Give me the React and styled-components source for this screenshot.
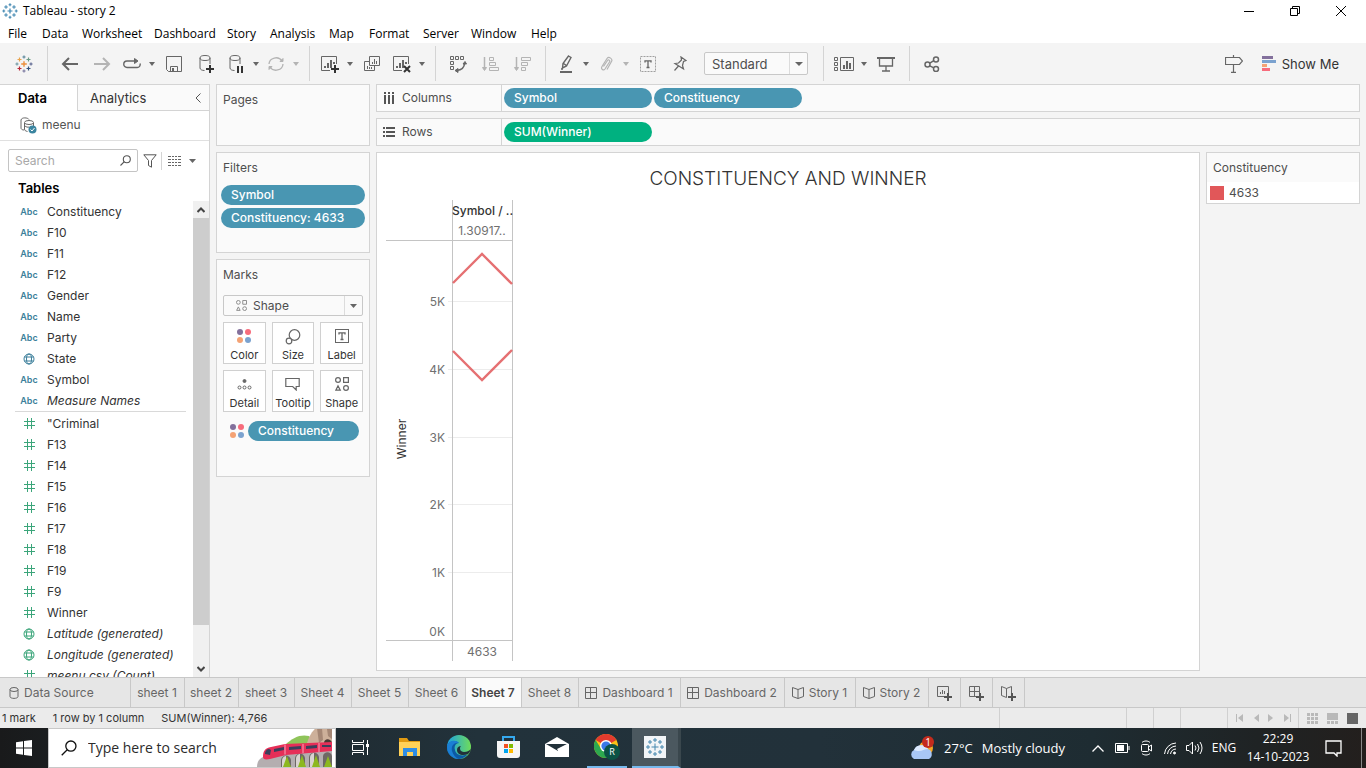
import React from "react";
import styled, { createGlobalStyle, css } from "styled-components";

const ui = `Inter, "Open Sans", sans-serif`;
const win = `"Open Sans", "Noto Sans", sans-serif`;

const Global = createGlobalStyle`
  *, *::before, *::after { box-sizing: border-box; }
  body { margin: 0; background: #f4f4f4; color: #333; font: 12px/16px ${ui}; }
  button, input, select { font: inherit; color: inherit; margin: 0; }
  button { background: none; border: 0; padding: 0; cursor: pointer; }
  svg { display: block; flex: none; }
`;

const Window = styled.div`
  display: flex;
  flex-direction: column;
  height: 100vh;
  overflow: hidden;
`;

/* ---------- title bar and menu ---------- */
const TitleBar = styled.header`
  display: flex;
  align-items: center;
  height: 24px;
  background: #fff;
  color: #000;
  font: 12px/16px ${win};
  padding: 0 2px 2px;
`;
const AppTitle = styled.h1`
  flex: 1;
  margin: 0 0 0 5px;
  font: inherit;
`;
const WindowButton = styled.button`
  display: grid;
  place-items: center;
  width: 46px;
  height: 22px;
`;
const MenuBar = styled.nav`
  display: flex;
  height: 19px;
  background: #fff;
  padding-left: 8px;
`;
const MenuItem = styled.button`
  font: 12px/18px ${win};
  color: #000;
  width: ${(p) => p.$w}px;
  text-align: left;
  white-space: nowrap;
`;

/* ---------- toolbar ---------- */
const Toolbar = styled.div`
  display: flex;
  align-items: center;
  height: 41px;
  padding-right: 27px;
  color: #555;
`;
const ToolButton = styled.button`
  display: grid;
  place-items: center;
  width: ${(p) => (p.$menu ? 28 : 32)}px;
  height: 32px;
  color: ${(p) => (p.$off ? "#b4b4b4" : "#666")};
`;
const CaretButton = styled.button`
  display: grid;
  place-items: center;
  width: 12px;
  height: 32px;
  color: ${(p) => (p.$off ? "#b4b4b4" : "#666")};
`;
const LogoButton = styled(ToolButton)`
  width: 47px;
`;
const Divider = styled.span`
  width: 1px;
  height: 35px;
  background: #d4d4d4;
  margin-right: 6px;
  margin-left: ${(p) => p.$left || 0}px;
`;
const SelectBox = styled.div`
  position: relative;
  display: flex;
  align-items: center;
  height: ${(p) => p.$h}px;
  width: ${(p) => p.$w}px;
  background: #fafafa;
  border: 1px solid #c8c8c8;
  border-radius: 2px;
  margin-left: ${(p) => p.$left || 0}px;

  select {
    appearance: none;
    flex: 1;
    height: 100%;
    border: 0;
    outline: 0;
    background: none;
    padding: 0 0 0 ${(p) => p.$pad}px;
    color: #4e4e4e;
    font-size: ${(p) => p.$font}px;
  }
`;
const SelectArrow = styled.span`
  position: absolute;
  right: 0;
  top: 0;
  bottom: 0;
  width: 18px;
  display: grid;
  place-items: center;
  border-left: 1px solid #dcdcdc;
  color: #666;
  pointer-events: none;
`;
const SelectIcon = styled.span`
  position: absolute;
  left: 12px;
  color: #888;
`;
const Spacer = styled.span`
  flex: 1;
`;
const ShowMe = styled.button`
  display: flex;
  align-items: center;
  gap: 6px;
  margin-left: 12px;
  font-size: 13px;
  line-height: 16px;
  color: #333;
`;

/* ---------- body ---------- */
const Body = styled.div`
  display: flex;
  flex: 1;
  min-height: 0;
`;
const DataPane = styled.aside`
  display: flex;
  flex-direction: column;
  width: 210px;
  background: #fff;
  border: solid #d4d4d4;
  border-width: 1px 1px 0 0;
`;
const PaneTabs = styled.div`
  display: flex;
  height: 26px;
`;
const PaneTab = styled.button`
  font-size: 13px;
  line-height: 24px;
  text-align: left;
  ${(p) =>
    p.$active
      ? css`
          width: 77px;
          padding-left: 18px;
          font-weight: 600;
          color: #000;
        `
      : css`
          flex: 1;
          padding-left: 12px;
          background: #fafafa;
          border: solid #d4d4d4;
          border-width: 0 0 1px 1px;
          color: #333;
        `}
`;
const CollapseButton = styled.button`
  display: grid;
  place-items: center;
  width: 22px;
  background: #fafafa;
  border-bottom: 1px solid #d4d4d4;
`;
const Source = styled.button`
  display: flex;
  align-items: center;
  gap: 5px;
  height: 30px;
  padding: 0 0 1px 20px;
  border-bottom: 1px solid #e0e0e0;
  color: #555;
`;
const SearchRow = styled.div`
  display: flex;
  align-items: center;
  padding: 8px 8px 0;
`;
const SearchField = styled.label`
  display: flex;
  align-items: center;
  width: 130px;
  height: 23px;
  border: 1px solid #c4c4c4;
  border-radius: 2px;
  padding-right: 6px;

  input {
    flex: 1;
    min-width: 0;
    border: 0;
    outline: 0;
    background: none;
    padding: 0 6px;
  }
  input::placeholder { color: #a8a8a8; opacity: 1; }
`;
const SmallButton = styled.button`
  display: grid;
  place-items: center;
  width: ${(p) => p.$w}px;
  height: 18px;
  color: #666;
  ${(p) => p.$line && "border-left: 1px solid #d4d4d4;"}
`;
const TablesHeading = styled.h2`
  margin: 0;
  padding: 7px 0 4px 18px;
  font-size: 13px;
  font-weight: 600;
  line-height: 18px;
  color: #000;
`;
const FieldArea = styled.div`
  display: flex;
  flex: 1;
  min-height: 0;
`;
const FieldList = styled.ul`
  flex: 1;
  margin: 0;
  padding: 0 7px 0 15px;
  list-style: none;
  overflow: hidden;
`;
const Field = styled.li`
  display: flex;
  align-items: center;
  height: 21px;
  color: #333;
  white-space: nowrap;
  font-style: ${(p) => (p.$gen ? "italic" : "normal")};
  ${(p) =>
    p.$first &&
    css`
      height: 23px;
      padding-top: 1px;
      border-top: 1px solid #d9d9d9;
    `}
`;
const FieldType = styled.span`
  display: grid;
  place-items: center;
  width: 28px;
  margin-right: 4px;
  font: 600 9px/12px ${ui};
  color: ${(p) => (p.$green ? "#3ba57a" : "#3c7f9b")};
`;
const Scrollbar = styled.div`
  display: flex;
  flex-direction: column;
  width: 16px;
  background: #f0f0f0;
`;
const ScrollButton = styled.button`
  display: grid;
  place-items: center;
  height: 17px;
  flex: none;
`;
const ScrollThumb = styled.div`
  flex: 406;
  background: #cdcdcd;
`;
const ScrollRest = styled.div`
  flex: 35;
`;

const Cards = styled.div`
  display: flex;
  flex-direction: column;
  gap: 6px;
  width: 154px;
  margin-left: 6px;
`;
const Card = styled.section`
  flex: none;
  min-height: ${(p) => p.$h}px;
  padding: 0 4px;
  background: #fafafa;
  border: 1px solid #d4d4d4;
`;
const CardTitle = styled.h3`
  margin: 0;
  padding: 7px 2px 8px;
  font-size: 12px;
  font-weight: 400;
  line-height: 16px;
  color: #4e4e4e;
`;
const Pill = styled.button`
  display: block;
  height: 20px;
  width: ${(p) => (p.$w ? `${p.$w}px` : "100%")};
  padding-left: 10px;
  border-radius: 10px;
  background: ${(p) => (p.$green ? "#00b180" : "#4996b2")};
  color: #fff;
  font-weight: 500;
  text-align: left;
  white-space: nowrap;
`;
const Stack = styled.div`
  display: grid;
  gap: 3px;
  padding-top: 1px;
`;
const MarksBody = styled.div`
  padding: 4px 2px 0;
`;
const MarkGrid = styled.div`
  display: grid;
  grid-template-columns: repeat(3, 1fr);
  gap: 6px;
  padding-top: 6px;
`;
const MarkButton = styled.button`
  display: flex;
  flex-direction: column;
  align-items: center;
  justify-content: space-between;
  height: 42px;
  padding: 6px 0 1px;
  background: #fff;
  border: 1px solid #d0d0d0;
  font-size: 11px;
  line-height: 14px;
  color: #333;

  svg { color: #666; }
`;
const Encoding = styled.div`
  display: flex;
  align-items: center;
  gap: 4px;
  padding: 9px 0 0 7px;
`;

const Workspace = styled.main`
  flex: 1;
  min-width: 0;
  display: flex;
  flex-direction: column;
  gap: 6px;
  padding: 0 6px 6px;
`;
const Shelf = styled.section`
  display: flex;
  height: 28px;
  flex: none;
  background: #fafafa;
  border: 1px solid #d4d4d4;
`;
const ShelfLabel = styled.div`
  display: flex;
  align-items: center;
  gap: 7px;
  width: 125px;
  padding-left: 6px;
  border-right: 1px solid #d4d4d4;
  color: #4e4e4e;
`;
const ShelfPills = styled.div`
  display: flex;
  align-items: center;
  gap: 2px;
  padding-left: 2px;
`;
const ViewRow = styled.div`
  display: flex;
  flex: 1;
  min-height: 0;
  gap: 6px;
  align-items: flex-start;
`;
const View = styled.section`
  flex: 1;
  align-self: stretch;
  background: #fff;
  border: 1px solid #d4d4d4;
  overflow: hidden;
`;
const ViewTitle = styled.h2`
  margin: 0;
  padding: 13px 0 8px;
  text-align: center;
  font: 300 19px/26px ${ui};
  color: #333;
`;
const Chart = styled.svg`
  margin-left: 9px;
  font: 12px ${ui};
  fill: #707070;
`;
const Legend = styled.section`
  width: 154px;
  background: #fff;
  border: 1px solid #d4d4d4;
`;
const LegendTitle = styled.h3`
  margin: 0;
  padding: 7px 6px 6px;
  background: #fafafa;
  font-size: 12px;
  font-weight: 400;
  line-height: 16px;
  color: #4e4e4e;
`;
const LegendItem = styled.div`
  display: flex;
  align-items: center;
  gap: 5px;
  height: 21px;
  padding-left: 3px;
  color: #4e4e4e;
`;
const Swatch = styled.span`
  width: 14px;
  height: 14px;
  background: #e15759;
`;

/* ---------- sheet tabs and status ---------- */
const SheetTabs = styled.nav`
  display: flex;
  height: 31px;
  flex: none;
  background: #e6e6e6;
  border: solid #c8c8c8;
  border-width: 1px 0;
`;
const SheetTab = styled.button`
  display: flex;
  align-items: center;
  justify-content: ${(p) => (p.$start ? "flex-start" : "center")};
  gap: 5px;
  width: ${(p) => p.$w}px;
  padding: ${(p) => (p.$start ? "0 0 0 9px" : "0 1px 0 0")};
  border-right: 1px solid #c8c8c8;
  color: #666;
  white-space: nowrap;
  ${(p) => p.$active && "background: #fafafa; color: #444; font-weight: 600;"}
`;
const Status = styled.footer`
  display: flex;
  height: 20px;
  flex: none;
  background: #ebebeb;
  font-size: 11px;
  line-height: 20px;
  color: #333;
`;
const StatusText = styled.span`
  padding-left: 2px;
  margin-right: 15px;
`;
const StatusCell = styled.div`
  display: flex;
  align-items: center;
  justify-content: space-around;
  width: ${(p) => p.$w}px;
  padding: 0 3px;
  border-left: 1px solid #d0d0d0;
  color: #b9b9b9;
`;
const StatusButton = styled.button`
  display: grid;
  place-items: center;
`;

/* ---------- taskbar ---------- */
const Taskbar = styled.div`
  display: flex;
  height: 40px;
  flex: none;
  background: linear-gradient(90deg, #191a1b 0, #1d2529 12%, #22323b 35%, #22313a 60%, #1e2c32 80%, #1f2324 92%, #231f1d 100%);
  color: #fff;
  font: 12px/18px ${win};
`;
const StartButton = styled.button`
  display: grid;
  place-items: center;
  width: 48px;
`;
const TaskSearch = styled.label`
  display: flex;
  align-items: center;
  width: 288px;
  padding-left: 12px;
  background: #fff;
  border: 1px solid #c8c8c8;
  overflow: hidden;

  input {
    flex: 1;
    min-width: 0;
    border: 0;
    outline: 0;
    background: none;
    padding: 0 0 0 11px;
    font-size: 14px;
  }
  input::placeholder { color: #2b2b2b; opacity: 1; }
`;
const TaskButton = styled.button`
  display: grid;
  place-items: center;
  width: ${(p) => (p.$narrow ? 40 : 49)}px;
  margin: ${(p) => (p.$narrow ? "0 5px 0 6px" : 0)};
  border-bottom: 2px solid ${(p) => (p.$open ? "#76b9ed" : "transparent")};
  background: ${(p) => (p.$active ? "#4b585f" : "none")};
  ${(p) => p.$active && "border-right: 3px solid #3a474d;"}
`;
const Weather = styled.button`
  display: flex;
  align-items: center;
  gap: 9px;
  margin-right: 21px;
  font-size: 13px;
  white-space: nowrap;
`;
const TrayButton = styled.button`
  display: grid;
  place-items: center;
  width: 24px;
`;
const Language = styled.button`
  width: 36px;
`;
const Clock = styled.button`
  width: 72px;
  text-align: center;
`;
const Notices = styled.button`
  display: grid;
  place-items: center;
  width: 48px;
  padding-right: 9px;
  border-right: 1px solid #888;
  margin-right: 4px;
`;

/* ---------- drawings ---------- */
const Caret = ({ w = 6 }) => (
  <svg width={w} height="4" viewBox="0 0 8 5" preserveAspectRatio="none" fill="currentColor"><path d="M0 0h8L4 5z" /></svg>
);
const Line = ({ w = 18, h = 18, sw = 1, children }) => (
  <svg width={w} height={h} viewBox={`0 0 ${w} ${h}`} fill="none" stroke="currentColor" strokeWidth={sw}>{children}</svg>
);
const plus = (x, y, r) => `M${x - r} ${y}h${2 * r}M${x} ${y - r}v${2 * r}`;
const TableauMark = ({ size = 18, mono }) => {
  const c = (v) => mono || v;
  return (
    <svg width={size} height={size} viewBox="0 0 18 18" fill="none" strokeWidth="1.2">
      <path stroke={c("#eb8f3c")} strokeWidth="1.4" d={plus(9, 9, 2.8)} />
      <path stroke={c("#5b879b")} d={plus(9, 2, 1.6)} />
      <path stroke={c("#7099a5")} d={plus(2, 9, 1.6)} />
      <path stroke={c("#5c6692")} d={plus(16, 9, 1.6)} />
      <path stroke={c("#7b78a0")} d={plus(9, 16, 1.6)} />
      <path stroke={c("#e8a34d")} d={plus(4.5, 4.5, 2)} />
      <path stroke={c("#6b9a86")} d={plus(13.5, 4.5, 2)} />
      <path stroke={c("#b72a3a")} d={plus(4.5, 13.5, 2)} />
      <path stroke={c("#34527c")} d={plus(13.5, 13.5, 2)} />
    </svg>
  );
};
const Back = ({ flip }) => (
  <Line w={18} h={14} sw={2}>
    <path d={flip ? "M1 7h15M10 1l6 6-6 6" : "M17 7H2M8 1L2 7l6 6"} />
  </Line>
);
const Redo = () => (
  <Line h={12} sw={1}>
    <path strokeWidth="1.4" d="M12 3H4a3.2 3.2 0 0 0 0 6.500h10a3 3 0 0 0 3-4" /><path fill="currentColor" d="M11.500.5l3.500 2.500-3.500 2.500z" />
  </Line>
);
const Save = () => (
  <Line w={16} h={16}><path d="M.5.5h15v15H2.5l-2-2zM4.500 15.500v-5h7v5" /><path strokeWidth="2" d="M7 12v3" /></Line>
);
const Cylinder = ({ mark }) => (
  <Line>
    <ellipse cx="8" cy="3" rx="5" ry="2.500" /><path d="M3 3v10c0 1.500 2 2.500 4.500 2.500M13 3v6" />
    <path stroke="#333" strokeWidth="2" d={mark === "plus" ? "M9 14h8M13 10v8" : "M11 11v7M15 11v7"} />
  </Line>
);
const Refresh = () => (
  <Line h={16}><path strokeWidth="1.3" d="M2 8a7 6.500 0 0 1 13-3M16 8a7 6.500 0 0 1-13 3" /><path fill="currentColor" d="M13 5.500h3V2.500zM5 10.500H2v3z" /></Line>
);
const bars = "M5 13v-2M8 13V8M11 13V5";
const NewSheet = ({ mark }) => (
  <Line w={20}>
    <path d="M10 15.500H1.500V1.500h15V9" /><path strokeWidth="2" d={`${bars}M14 9V7`} />
    <path stroke="#333" strokeWidth="2" d={mark === "x" ? "M12 11l6 6M18 11l-6 6" : "M11 14h8M15 10v8"} />
  </Line>
);
const Duplicate = () => (
  <Line><path d="M6.500 1.500h10v9h-10zM6 6.500H1.500v9h10V11" /><path d="M9.500 9V7M11.500 9V4M13.500 9V6M4.500 14v-3M6.500 14v-2M8.500 14v-2" /></Line>
);
const Swap = () => (
  <Line><path d="M1.500 1.500h3v3h-3zM6.500 1.500h3v3h-3zM11.500 1.500h3v3h-3zM1.500 6.500h3v3h-3zM1.500 11.500h3v3h-3z" /><path strokeWidth="1.500" d="M15.500 8c0 5-3 7-8 7.500" /><path fill="currentColor" d="M14 9l2-2.500 1.500 2.500zM9 13.500v4l-3-2z" /></Line>
);
const Sort = ({ desc }) => (
  <Line><path d="M3.500 2v12" strokeWidth="1.500" /><path fill="currentColor" d="M1.500 12.500h4l-2 3z" /><path d={desc ? "M8.500 2.500h9v3h-9zM8.500 7.500h6v3h-6zM8.500 12.500h4v3h-4z" : "M8.500 2.500h4v3h-4zM8.500 7.500h6v3h-6zM8.500 12.500h9v3h-9z"} /></Line>
);
const Highlighter = () => (
  <Line w={14}><path strokeWidth="1.400" d="M9.500 1l2.500 1.500L7.500 11l-4 2 .5-4.500zM4.500 8.500l3 2" /><path strokeWidth="2" d="M1 17h12" /><path d="M2 14h2" strokeWidth="1.500" /></Line>
);
const Clip = () => (
  <Line w={14} h={16}><path strokeWidth="1.200" d="M4.500 10.500l4-6c1-1.500 3 0 2 1.500L6 13c-1.500 2-4.500 0-3-2.500l5-8c2-2.500 6 .5 4.500 3L8 13.500" /></Line>
);
const Boxed = ({ dashed, size = 16 }) => (
  <Line w={size} h={size}>
    <rect x=".5" y=".5" width={size - 1} height={size - 1} strokeDasharray={dashed ? "2 1" : "none"} strokeOpacity={dashed ? 0.6 : 1} />
    <path strokeWidth="1.300" d={`M${size / 2 - 3} ${size / 2 - 1.500}v-1.700h6v1.700M${size / 2} ${size / 2 - 3}v6.500M${size / 2 - 1.500} ${size / 2 + 3.500}h3`} />
  </Line>
);
const Pin = () => (
  <Line w={14} h={16}><path strokeWidth="1.200" d="M8 1l5 3.500-2.500 1-1 4 1 3.500L2 7.500l3.500-.5L8.500 4zM5.500 10l-4 4.500" /></Line>
);
const CardsIcon = () => (
  <Line w={22} h={16}><path d="M1.500 1.500h3v3h-3zM1.500 6.500h3v3h-3zM1.500 11.500h3v3h-3zM7.500 1.500h13v13h-13z" /><path strokeWidth="2" d="M11 13V9M14 13V5M17 13V7" /></Line>
);
const Present = () => (
  <Line h={16}><path strokeWidth="2" d="M0 2h18" /><path strokeWidth="1.300" d="M2.500 2v8h13V2M9 10v5M5 15h8" /></Line>
);
const Share = () => (
  <Line w={16} h={16} sw={1.500}><circle cx="3.500" cy="8.500" r="2.500" /><circle cx="12" cy="3.500" r="2.500" /><circle cx="12" cy="13" r="2.500" /><path d="M5.800 7.200l4-2.500M5.800 9.800l4 2" /></Line>
);
const Signpost = () => (
  <Line h={18} sw={1.200}><path d="M.5 2.500h14l3 3.500-3 3.500H.5zM8.500 0v2M8.500 10v7M6 17.300h5" /></Line>
);
const ShowMeBars = () => (
  <svg width="14" height="15"><path fill="#83709c" d="M0 0h11v3H0z" /><path fill="#7ba2cf" d="M0 4h14v3H0z" /><path fill="#f4a274" d="M0 8h5v3H0z" /><path fill="#f76c7c" d="M0 12h8v3H0z" /></svg>
);
const Dots = () => (
  <svg width="14" height="14"><circle cx="3" cy="3" r="3" fill="#83709c" /><circle cx="11" cy="3" r="3" fill="#f76c7c" /><circle cx="3" cy="11" r="3" fill="#f4a274" /><circle cx="11" cy="11" r="3" fill="#7ba2cf" /></svg>
);
const Shapes = ({ size = 14 }) => (
  <svg width={size} height={size} viewBox="0 0 14 14" fill="none" stroke="currentColor" strokeWidth="1.200"><circle cx="3" cy="3" r="2.400" /><path d="M8.600.6h4.800v4.800H8.600zM.8 13.200L3 8.800l2.300 4.400z" /><circle cx="11" cy="11" r="2.400" /></svg>
);
const SizeIcon = () => <Line w={16} h={16} sw={1.2}><circle cx="9.500" cy="6" r="5.300" /><circle cx="4" cy="12" r="2.800" fill="#fff" /></Line>;
const DetailIcon = () => <Line w={15} h={14}><circle cx="7.500" cy="4" r="1.500" fill="currentColor" /><circle cx="2.500" cy="10.500" r="1.500" /><circle cx="7.500" cy="10.500" r="1.500" /><circle cx="12.500" cy="10.500" r="1.500" /></Line>;
const TooltipIcon = () => <Line w={15} h={14}><path strokeWidth="1.200" d="M.8 1.500h13.400v8h-3v3.500l-3.500-3.500H.8z" /></Line>;
const Hash = () => <svg width="11" height="11" fill="none" stroke="currentColor" strokeWidth="1"><path d="M3.500 0v11M7.500 0v11M0 3.500h11M0 7.500h11" /></svg>;
const Globe = () => <svg width="12" height="12" fill="none" stroke="currentColor"><circle cx="6" cy="6" r="5" /><ellipse cx="6" cy="6" rx="2.500" ry="5" /><path d="M1.500 4h9M1.500 8h9" /></svg>;
const SourceIcon = () => (
  <svg width="17" height="17" fill="none" stroke="#666"><path d="M9 2.500C8 .5 1.500 0 1 3v8c0 1 1 2 3 2" /><ellipse cx="9" cy="5.500" rx="4.500" ry="2" /><path d="M4.500 6v6c0 1.500 1 2 3 2.500M13.500 6v3M5 9c1 1 3 1.500 4 1" /><circle cx="12.500" cy="12.500" r="4" fill="#3b85a0" stroke="none" /><path stroke="#fff" d="M10.500 12.500l1.500 1.500 2.500-3" /></svg>
);
const Magnifier = ({ size = 11, color = "#555" }) => (
  <svg width={size} height={size} viewBox="0 0 11 11" fill="none" stroke={color} strokeWidth={size > 12 ? 0.9 : 1.100}><circle cx="6.800" cy="4.200" r="3.500" /><path d="M4.300 6.700L.5 10.500" /></svg>
);
const Funnel = () => <Line w={14} h={14}><path stroke="#555" d="M.8.8h12.400L8.500 6.500v6.700l-3-1.700v-5z" /></Line>;
const ListIcon = () => <svg width="13" height="10" stroke="#666" strokeWidth="1" fill="none"><path d="M0 .5h3M4 .5h2M7 .5h2M10 .5h3M0 3.500h3M4 3.500h2M7 3.500h2M10 3.500h3M0 6.500h3M4 6.500h2M7 6.500h2M10 6.500h3M0 9.500h3M4 9.500h2M7 9.500h2M10 9.500h3" /></svg>;
const DashIcon = () => <Line w={12} h={12}><path d="M.5.5h11v11H.5zM5.500.5v11M.5 5.500h11" /></Line>;
const StoryIcon = () => <Line w={12} h={12}><path d="M6 2.500L.5.500v9L6 11.500l5.500-2v-9zM6 2.500v9" /></Line>;
const AddTab = ({ kind }) => (
  <Line w={16} h={16}>
    {kind === "sheet" && <path d="M8 11.500H1.500V1.500h11V8M4.500 9V7M6.500 9V5M8.500 9V6" />}
    {kind === "dash" && <path d="M8 11.500H1.500V1.500h10V8M6.500 1.500v10M1.500 6.500h10" />}
    {kind === "story" && <path d="M6.500 3.500l-5-2v9l5 2v-9l5-2V8" />}
    <path strokeWidth="2" stroke="#555" d="M8 12h8M12 8v8" />
  </Line>
);
const CylinderSmall = () => <svg width="10" height="12" fill="none" stroke="#666"><ellipse cx="5" cy="2.500" rx="4" ry="2" /><path d="M1 2.500v7c0 2.500 8 2.500 8 0v-7" /></svg>;
const Nav = ({ bar, flip }) => (
  <svg width="7" height="8" viewBox="0 0 7 8" fill="currentColor"><path d={flip ? "M0 0v8l5-4z" : "M7 0v8L2 4z"} />{bar && <path d={flip ? "M6 0h1v8H6z" : "M0 0h1v8H0z"} />}</svg>
);
const Train = () => (
  <svg width="78" height="38" viewBox="0 0 78 38">
    <path fill="#8fc45a" d="M28 16C36 8 44 5 52 7l8 10z" />
    <path fill="#cdb09a" d="M50 14c2-6 4-11 10-16h15v24H54z" />
    <path fill="#a58775" d="M60 -1h5l1 12-4 3zM70 0h5v10l-4-3z" />
    <path fill="#4a3834" d="M67 14c0-5 7-5 8 0v4h-8z" />
    <path fill="#b4aeb0" d="M0 38c0-7 4-10 10-11l65-6v17z" />
    <path fill="#6d6865" d="M24 38V31c1-6 9-6 10 0v7zM38 38V29c1-6 9-6 10 0v9zM52 38V28c1-6 9-6 10 0v10zM66 38V27c1-5 8-5 9 0v11z" />
    <path fill="#d9d4d0" d="M25 38V32c0-4 3-5 4-5v11zM39 38V30c0-4 3-5 4-5v13zM53 38V29c0-4 3-5 4-5v14z" />
    <path fill="#8cb81e" d="M26 38l4-11 4 11zM41 38l4-12 4 12zM55 38l4-12 4 12zM67 38l4-11 4 11z" />
    <path fill="#e62f58" d="M6 28c0-6 2-9 8-10l14-3 47-2v9l-46 4-16 4c-5 1-7 0-7-2z" />
    <path fill="#3a3f5c" d="M8 24c1-3 2-4 4-4l2 1-1 5-5-1zM17 20l10-2v3l-10 2zM32 18l12-1v3l-12 1zM49 17l11-1v3l-11 1zM65 16h9v2h-9z" />
    <path stroke="#f9a5ba" fill="none" d="M28 15.500v10M46 15v9M62 14v9" />
  </svg>
);

const Edge = () => (
  <svg width="24" height="24" viewBox="0 0 24 24">
    <defs>
      <linearGradient id="edgeTop" x2="1"><stop stopColor="#1ba1e2" /><stop offset="1" stopColor="#6fdc5a" /></linearGradient>
    </defs>
    <circle cx="12" cy="12" r="12" fill="url(#edgeTop)" />
    <path fill="#0c59a4" d="M0 12c1-6 8-8 12-4-4 0-5 4-4 7 1 5 7 7 13 4-3 4-7 5-10 5C4 23 0 18 0 12z" />
    <path fill="#1b7fd4" d="M0 12c1-7 9-8 12-4-5-1-8 3-7 8 1 4 4 7 7 8C5 24 0 18 0 12z" />
    <path fill="#22313a" d="M14 11c-2 2-1 6 3 6 3 0 5-1 7-3-1 3-2 4-3 5-5 2-11 1-11-4 0-3 2-4 4-4z" />
  </svg>
);
const Chrome = () => (
  <svg width="26" height="26" viewBox="0 0 26 26">
    <circle cx="12" cy="12" r="12" fill="#fbc116" />
    <path fill="#e33b2e" d="M12 12L1.600 6A12 12 0 0 1 22.400 6z" />
    <path fill="#2da94f" d="M12 24A12 12 0 0 1 1.600 6l5.600 9 5 3z" />
    <circle cx="12" cy="12" r="6" fill="#fff" /><circle cx="12" cy="12" r="4.600" fill="#3b78e7" />
    <circle cx="18" cy="18" r="8" fill="#0b5345" />
    <text x="18" y="21" textAnchor="middle" fill="#fff" fontSize="9" fontFamily="Open Sans, sans-serif">R</text>
  </svg>
);

/* ---------- data ---------- */
const menus = [["File", 34], ["Data", 40], ["Worksheet", 72], ["Dashboard", 73], ["Story", 43], ["Analysis", 59], ["Map", 40], ["Format", 54], ["Server", 48], ["Window", 60], ["Help", 40]];
const fields = [
  ["abc", "Constituency"], ["abc", "F10"], ["abc", "F11"], ["abc", "F12"], ["abc", "Gender"], ["abc", "Name"], ["abc", "Party"],
  ["geo", "State"], ["abc", "Symbol"], ["abc", "Measure Names", true],
  ["num", '"Criminal', false, true], ["num", "F13"], ["num", "F14"], ["num", "F15"], ["num", "F16"], ["num", "F17"], ["num", "F18"],
  ["num", "F19"], ["num", "F9"], ["num", "Winner"], ["lat", "Latitude (generated)", true], ["lat", "Longitude (generated)", true], ["num", "meenu.csv (Count)", true],
];
const typeIcon = { abc: "Abc", geo: <Globe />, lat: <Globe />, num: <Hash /> };
const markButtons = [
  ["Color", <Dots />], ["Size", <SizeIcon />], ["Label", <Boxed size={14} />],
  ["Detail", <DetailIcon />], ["Tooltip", <TooltipIcon />], ["Shape", <Shapes />],
];
const sheets = [
  ["sheet 1", 54], ["sheet 2", 54], ["sheet 3", 56], ["Sheet 4", 57], ["Sheet 5", 57], ["Sheet 6", 57], ["Sheet 7", 56], ["Sheet 8", 57],
  ["Dashboard 1", 102, <DashIcon />], ["Dashboard 2", 104, <DashIcon />], ["Story 1", 71, <StoryIcon />], ["Story 2", 73, <StoryIcon />],
];
const ticks = [["5K", 101], ["4K", 169], ["3K", 237], ["2K", 304], ["1K", 372]];

const Tool = ({ label, off, menu, children }) => (
  <>
    <ToolButton aria-label={label} $off={off} $menu={menu}>{children}</ToolButton>
    {menu && <CaretButton aria-label={`${label} options`} $off={off}><Caret /></CaretButton>}
  </>
);

const WinnerChart = () => (
  <Chart width="127" height="462" role="img" aria-label="Winner by symbol and constituency">
    <path stroke="#ececec" d={ticks.map(([, y]) => `M62 ${y + 0.5}h64`).join("")} />
    <path stroke="#c4c4c4" fill="none" d="M0 40.500h127M0 440.500h127M66.500 0v461M126.500 0v461" />
    <path stroke="#e15759" strokeOpacity=".85" strokeWidth="2.400" fill="none" d="M67 83L96 54l30 30M67 151l29 29 30-30" />
    <text x="66" y="15" fill="#333" fontWeight="500">Symbol / ..</text>
    <text x="96" y="35" textAnchor="middle">1.30917..</text>
    {ticks.map(([label, y]) => <text key={label} x="59" y={y + 5} textAnchor="end">{label}</text>)}
    <text x="59" y="436" textAnchor="end">0K</text>
    <text x="96" y="456" textAnchor="middle">4633</text>
    <text transform="translate(20 239) rotate(-90)" textAnchor="middle" fill="#333">Winner</text>
  </Chart>
);

export default function App() {
  return (
    <Window>
      <Global />
      <TitleBar>
        <TableauMark size={16} mono="#3f86b0" />
        <AppTitle>Tableau - story 2</AppTitle>
        <WindowButton aria-label="Minimize"><svg width="10" height="10"><path d="M0 5.500h10" stroke="#000" /></svg></WindowButton>
        <WindowButton aria-label="Restore"><svg width="10" height="10" fill="none" stroke="#000"><path d="M.5 2.500h7v7h-7zM2.500 2.500v-2h7v7h-2" /></svg></WindowButton>
        <WindowButton aria-label="Close"><svg width="10" height="10" stroke="#000"><path d="M0 0l10 10M10 0L0 10" /></svg></WindowButton>
      </TitleBar>
      <MenuBar>{menus.map(([m, w]) => <MenuItem key={m} $w={w}>{m}</MenuItem>)}</MenuBar>

      <Toolbar>
        <LogoButton aria-label="Start page"><TableauMark /></LogoButton>
        <Divider />
        <Tool label="Undo"><Back /></Tool>
        <Tool label="Redo" off><Back flip /></Tool>
        <Tool label="Replay" menu><Redo /></Tool>
        <Tool label="Save"><Save /></Tool>
        <Tool label="New data source"><Cylinder mark="plus" /></Tool>
        <Tool label="Pause updates" menu><Cylinder mark="pause" /></Tool>
        <Tool label="Refresh" menu off><Refresh /></Tool>
        <Divider $left={7} />
        <Tool label="New worksheet" menu><NewSheet /></Tool>
        <Tool label="Duplicate"><Duplicate /></Tool>
        <Tool label="Clear sheet" menu><NewSheet mark="x" /></Tool>
        <Divider $left={7} />
        <Tool label="Swap"><Swap /></Tool>
        <Tool label="Sort ascending" off><Sort /></Tool>
        <Tool label="Sort descending" off><Sort desc /></Tool>
        <Divider $left={7} />
        <Tool label="Highlight" menu><Highlighter /></Tool>
        <Tool label="Group" menu off><Clip /></Tool>
        <Tool label="Mark labels"><Boxed dashed /></Tool>
        <Tool label="Fix axes"><Pin /></Tool>
        <SelectBox $w={104} $h={23} $pad={7} $font={13} $left={8}>
          <select aria-label="Fit"><option>Standard</option></select>
          <SelectArrow><Caret w={8} /></SelectArrow>
        </SelectBox>
        <Divider $left={15} />
        <Tool label="Show cards" menu><CardsIcon /></Tool>
        <Tool label="Presentation mode"><Present /></Tool>
        <Divider $left={7} />
        <Tool label="Share"><Share /></Tool>
        <Spacer />
        <ToolButton aria-label="Guide"><Signpost /></ToolButton>
        <ShowMe><ShowMeBars />Show Me</ShowMe>
      </Toolbar>

      <Body>
        <DataPane>
          <PaneTabs>
            <PaneTab $active>Data</PaneTab>
            <PaneTab>Analytics</PaneTab>
            <CollapseButton aria-label="Collapse pane"><svg width="6" height="10" fill="none" stroke="#555"><path d="M5.500.5L1 5l4.500 4.500" /></svg></CollapseButton>
          </PaneTabs>
          <Source><SourceIcon />meenu</Source>
          <SearchRow>
            <SearchField><input aria-label="Search fields" placeholder="Search" /><Magnifier /></SearchField>
            <SmallButton $w={23} aria-label="Filter"><Funnel /></SmallButton>
            <SmallButton $w={25} $line aria-label="View"><ListIcon /></SmallButton>
            <SmallButton $w={12} aria-label="View options"><Caret w={7} /></SmallButton>
          </SearchRow>
          <TablesHeading>Tables</TablesHeading>
          <FieldArea>
            <FieldList>
              {fields.map(([type, name, gen, first]) => (
                <Field key={name} $gen={gen} $first={first}>
                  <FieldType $green={type === "num" || type === "lat"}>{typeIcon[type]}</FieldType>
                  {name}
                </Field>
              ))}
            </FieldList>
            <Scrollbar>
              <ScrollButton aria-label="Scroll up"><svg width="8" height="6" fill="none" stroke="#444" strokeWidth="2"><path d="M.5 5L4 1.500 7.500 5" /></svg></ScrollButton>
              <ScrollThumb />
              <ScrollRest />
              <ScrollButton aria-label="Scroll down"><svg width="8" height="6" fill="none" stroke="#444" strokeWidth="2"><path d="M.5 1L4 4.500 7.500 1" /></svg></ScrollButton>
            </Scrollbar>
          </FieldArea>
        </DataPane>

        <Cards>
          <Card $h={62}><CardTitle>Pages</CardTitle></Card>
          <Card $h={101}>
            <CardTitle>Filters</CardTitle>
            <Stack><Pill>Symbol</Pill><Pill>Constituency: 4633</Pill></Stack>
          </Card>
          <Card $h={218}>
            <CardTitle>Marks</CardTitle>
            <MarksBody>
              <SelectBox $w={140} $h={21} $pad={29} $font={12}>
                <SelectIcon><Shapes size={11} /></SelectIcon>
                <select aria-label="Mark type"><option>Shape</option></select>
                <SelectArrow><Caret w={7} /></SelectArrow>
              </SelectBox>
              <MarkGrid>
                {markButtons.map(([label, icon]) => <MarkButton key={label}>{icon}{label}</MarkButton>)}
              </MarkGrid>
              <Encoding><Dots /><Pill $w={111}>Constituency</Pill></Encoding>
            </MarksBody>
          </Card>
        </Cards>

        <Workspace>
          <Shelf>
            <ShelfLabel><svg width="12" height="12" stroke="#555" strokeWidth="2"><path d="M2 0v2M6 0v2M10 0v2M2 3v9M6 3v9M10 3v9" /></svg>Columns</ShelfLabel>
            <ShelfPills><Pill $w={148}>Symbol</Pill><Pill $w={148}>Constituency</Pill></ShelfPills>
          </Shelf>
          <Shelf>
            <ShelfLabel><svg width="12" height="12" stroke="#555" strokeWidth="2"><path d="M0 2h2M0 6h2M0 10h2M3 2h9M3 6h9M3 10h9" /></svg>Rows</ShelfLabel>
            <ShelfPills><Pill $w={148} $green>SUM(Winner)</Pill></ShelfPills>
          </Shelf>
          <ViewRow>
            <View>
              <ViewTitle>CONSTITUENCY AND WINNER</ViewTitle>
              <WinnerChart />
            </View>
            <Legend>
              <LegendTitle>Constituency</LegendTitle>
              <LegendItem><Swatch />4633</LegendItem>
            </Legend>
          </ViewRow>
        </Workspace>
      </Body>

      <SheetTabs>
        <SheetTab $w={131} $start><CylinderSmall />Data Source</SheetTab>
        {sheets.map(([name, w, icon]) => <SheetTab key={name} $w={w} $active={name === "Sheet 7"}>{icon}{name}</SheetTab>)}
        <SheetTab $w={32} aria-label="New worksheet"><AddTab kind="sheet" /></SheetTab>
        <SheetTab $w={32} aria-label="New dashboard"><AddTab kind="dash" /></SheetTab>
        <SheetTab $w={32} aria-label="New story"><AddTab kind="story" /></SheetTab>
      </SheetTabs>
      <Status>
        <StatusText>1 mark</StatusText>
        <StatusText>1 row by 1 column</StatusText>
        <StatusText>SUM(Winner): 4,766</StatusText>
        <Spacer />
        <StatusCell $w={127} /><StatusCell $w={27} /><StatusCell $w={27} /><StatusCell $w={47} />
        <StatusCell $w={71}>
          <StatusButton aria-label="First"><Nav bar /></StatusButton>
          <StatusButton aria-label="Previous"><Nav /></StatusButton>
          <StatusButton aria-label="Next"><Nav flip /></StatusButton>
          <StatusButton aria-label="Last"><Nav flip bar /></StatusButton>
        </StatusCell>
        <StatusCell $w={68}>
          <StatusButton aria-label="Sheet sorter"><svg width="11" height="11" fill="currentColor"><path d="M0 0h3v3H0zM4 0h3v3H4zM8 0h3v3H8zM0 4h3v3H0zM4 4h3v3H4zM8 4h3v3H8zM0 8h3v3H0zM4 8h3v3H4zM8 8h3v3H8z" /></svg></StatusButton>
          <StatusButton aria-label="Filmstrip"><svg width="11" height="11" fill="currentColor"><path d="M0 0h11v7H0zM0 8h3v3H0zM4 8h3v3H4zM8 8h3v3H8z" /></svg></StatusButton>
          <StatusButton aria-label="Tabs"><svg width="11" height="11"><path fill="#666" d="M0 0h11v11H0z" /></svg></StatusButton>
        </StatusCell>
      </Status>

      <Taskbar>
        <StartButton aria-label="Start"><svg width="16" height="16" fill="#fff"><path d="M0 2.300L7 1.300v6.200H0zM8 1.100L16 0v7.500H8zM0 8.500h7v6.200l-7-1zM8 8.500h8V16l-8-1.100z" /></svg></StartButton>
        <TaskSearch><Magnifier size={16} color="#111" /><input aria-label="Windows search" placeholder="Type here to search" /><Train /></TaskSearch>
        <TaskButton aria-label="Task view"><svg width="17" height="15" fill="none" stroke="#fff"><path d="M.5 0v2.500h11V0M.5 4.500h11v6H.5zM.5 15v-2.500h11V15M15.500 0v15" /><path strokeWidth="3" d="M15.500 4v3" /></svg></TaskButton>
        <TaskButton aria-label="File Explorer"><svg width="22" height="18"><path fill="#e09a12" d="M0 0h8l2 3h11v3H0z" /><path fill="#ffd158" d="M0 4h21v14H0z" /><path fill="#2f8de4" d="M4 10h14v8h-4v-4H8v4H4z" /></svg></TaskButton>
        <TaskButton aria-label="Edge"><Edge /></TaskButton>
        <TaskButton aria-label="Store"><svg width="24" height="24"><path fill="none" stroke="#35a9ef" strokeWidth="2" d="M7 6V2h11v4" /><path fill="#f5f5f5" d="M1 6h23v14q0 3-3 3H4q-3 0-3-3z" /><path fill="#f25022" d="M8 9h4v4H8z" /><path fill="#7fba00" d="M13 9h4v4h-4z" /><path fill="#00a4ef" d="M8 14h4v4H8z" /><path fill="#ffb900" d="M13 14h4v4h-4z" /></svg></TaskButton>
        <TaskButton aria-label="Mail"><svg width="24" height="20"><path fill="#fff" d="M0 7l12-7 12 7v13H0z" /><path fill="#22313a" d="M1 7h21l-9 7z" /><path fill="#fff" d="M12 12l10-5-6 12z" /></svg></TaskButton>
        <TaskButton $open $narrow aria-label="Chrome"><Chrome /></TaskButton>
        <TaskButton $open $active aria-label="Tableau"><svg width="22" height="22"><path fill="#f2f5f7" d="M0 0h22v22H0z" /><g fill="none" stroke="#4587ae"><path d={plus(11, 11, 3.500)} /><path d={[[11, 4], [4, 11], [18, 11], [11, 18], [6, 6], [16, 6], [6, 16], [16, 16]].map(([x, y]) => plus(x, y, 2)).join("")} /></g></svg></TaskButton>
        <Spacer />
        <Weather>
          <svg width="26" height="24"><circle cx="17" cy="12" r="7" fill="#f5a623" /><path fill="#a9c7f5" d="M5 23a5 5 0 0 1 0-9 8 8 0 0 1 14-1 5.500 5.500 0 0 1 1 10z" /><path fill="#dce9fd" d="M5 14a8 8 0 0 1 14-1c-5 0-7 4-14 1z" /><circle cx="19" cy="6" r="6" fill="#c42b1c" /><text x="19" y="10" textAnchor="middle" fill="#fff" fontSize="10">1</text></svg>
          <span>27°C</span><span>Mostly cloudy</span>
        </Weather>
        <TrayButton aria-label="Hidden icons"><svg width="12" height="7" fill="none" stroke="#fff" strokeWidth="1.300"><path d="M.5 6.500L6 1l5.500 5.500" /></svg></TrayButton>
        <TrayButton aria-label="Battery"><svg width="15" height="10" fill="none" stroke="#fff"><path d="M.5.500h12v9H.5zM14 3v4" /><path fill="#fff" stroke="none" d="M2 2h7v6H2z" /></svg></TrayButton>
        <TrayButton aria-label="Meet now"><svg width="13" height="16" fill="none" stroke="#fff"><rect x="1.500" y="4.500" width="7" height="7" rx="1" /><path d="M8.500 7l3-2v6l-3-2M2 2.500C4 .5 8 .5 10 2.500M2 13.500c2 2 6 2 8 0" /></svg></TrayButton>
        <TrayButton aria-label="Network"><svg width="14" height="14" fill="none" stroke="#fff"><path d="M1.500 13A12 12 0 0 1 13 2M4.500 13A9 9 0 0 1 13 5M7.500 13A6 6 0 0 1 13 8" /><circle cx="11.500" cy="12" r="1" fill="#fff" /></svg></TrayButton>
        <TrayButton aria-label="Volume"><svg width="17" height="14" fill="none" stroke="#fff"><path d="M.5 4.500H3l3.500-3.500v12L3 9.500H.5zM9 4.500q2 2.500 0 5M11.500 3q3 4 0 8M14 1q4 6 0 12" /></svg></TrayButton>
        <Language>ENG</Language>
        <Clock>22:29<br />14-10-2023</Clock>
        <Notices aria-label="Notifications"><svg width="17" height="17" fill="none" stroke="#fff" strokeWidth="1.300"><path d="M1 1h15v12h-4v3l-3-3H1z" /></svg></Notices>
      </Taskbar>
    </Window>
  );
}
